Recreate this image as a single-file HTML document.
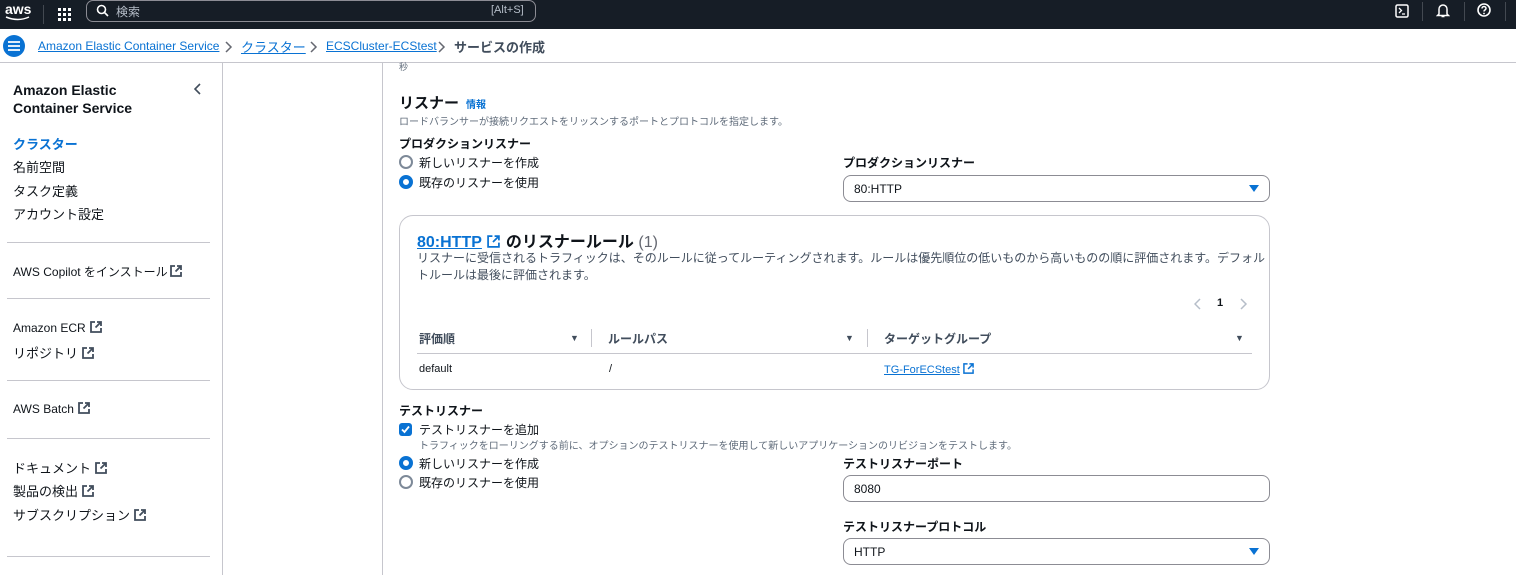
<!DOCTYPE html>
<html><head><meta charset="utf-8"><style>
*{margin:0;padding:0;box-sizing:border-box}
body{width:1516px;height:575px;overflow:hidden;background:#fff;font-family:"Liberation Sans","Noto Sans CJK JP",sans-serif;color:#0f141a;position:relative;font-size:13px}
.a{position:absolute;white-space:nowrap}
.top{position:absolute;left:0;top:0;width:1516px;height:29px;background:#161d26}
.bc{position:absolute;left:0;top:29px;width:1516px;height:34px;background:#fff;border-bottom:1px solid #c6c6cd}
.lnk{color:#0972d3;text-decoration:underline}
.hr{position:absolute;left:7px;width:203px;height:1px;background:#c6c6cd}
.nav{font-size:13px;color:#0f141a}
svg.ex{width:12px;height:12px;vertical-align:-1px;margin-left:4px}
.radio{position:absolute;width:14px;height:14px;border-radius:50%;border:2px solid #7d8998}
.radio.on{border:4px solid #0972d3}
.sel{position:absolute;border:1px solid #8c8c94;border-radius:8px;height:27px;font-size:12px;padding:6px 10px}
.tri{position:absolute;right:10px;top:9px;width:0;height:0;border-left:5px solid transparent;border-right:5px solid transparent;border-top:7px solid #0972d3}
.sm{font-size:10px;color:#5f6b7a}
.b{font-weight:bold}
.chev{position:absolute;top:12px}
</style></head><body>
<div class="top">
 <div class="a" style="left:5px;top:1px;color:#fff;font-size:14px;font-weight:bold">aws</div>
 <svg class="a" style="left:5px;top:16px" width="26" height="6"><path d="M1 1 Q13 6 24 1" stroke="#fff" stroke-width="1.5" fill="none"/></svg>
 <div class="a" style="left:43px;top:5px;width:1px;height:19px;background:#434951"></div>
 <svg class="a" style="left:58px;top:8px" width="13" height="13"><g fill="#fff"><rect x="0" y="0" width="3" height="3"/><rect x="5" y="0" width="3" height="3"/><rect x="10" y="0" width="3" height="3"/><rect x="0" y="5" width="3" height="3"/><rect x="5" y="5" width="3" height="3"/><rect x="10" y="5" width="3" height="3"/><rect x="0" y="10" width="3" height="3"/><rect x="5" y="10" width="3" height="3"/><rect x="10" y="10" width="3" height="3"/></g></svg>
 <div class="a" style="left:86px;top:0px;width:450px;height:22px;border:1px solid #8c8c94;border-radius:7px"></div>
 <svg class="a" style="left:96px;top:4px" width="13" height="13"><circle cx="5.5" cy="5.5" r="4" stroke="#fff" stroke-width="1.6" fill="none"/><path d="M8.5 8.5 12 12" stroke="#fff" stroke-width="1.6"/></svg>
 <div class="a" style="left:116px;top:3px;color:#b6bec9;font-size:12px">検索</div>
 <div class="a" style="left:491px;top:4px;color:#b6bec9;font-size:11px">[Alt+S]</div>
 <svg class="a" style="left:1395px;top:4px" width="14" height="14"><rect x="1" y="1" width="12" height="12" rx="1.5" stroke="#fff" stroke-width="1.5" fill="none"/><path d="M4 4 6.5 6.5 4 9M7 10h3" stroke="#fff" stroke-width="1.3" fill="none"/></svg>
 <div class="a" style="left:1422px;top:2px;width:1px;height:19px;background:#434951"></div>
 <svg class="a" style="left:1436px;top:3px" width="14" height="15"><path d="M3 11V6a4 4 0 018 0v5l1.5 1.5h-11z M5.5 13.5h3" stroke="#fff" stroke-width="1.5" fill="none"/></svg>
 <div class="a" style="left:1464px;top:2px;width:1px;height:19px;background:#434951"></div>
 <svg class="a" style="left:1477px;top:3px" width="14" height="14"><circle cx="7" cy="7" r="6" stroke="#fff" stroke-width="1.6" fill="none"/><path d="M5 5.5a2 2 0 114 0c0 1.3-2 1.5-2 3" stroke="#fff" stroke-width="1.5" fill="none"/><circle cx="7" cy="10.5" r=".9" fill="#fff"/></svg>
 <div class="a" style="left:1505px;top:2px;width:1px;height:19px;background:#434951"></div>
</div>
<div class="bc">
 <div class="a" style="left:3px;top:6px;width:22px;height:22px;border-radius:50%;background:#0972d3"></div>
 <svg class="a" style="left:8px;top:12px" width="12" height="10"><path d="M0 1h12M0 5h12M0 9h12" stroke="#fff" stroke-width="1.8"/></svg>
 <div class="a lnk" style="left:38px;top:10px;font-size:12px">Amazon Elastic Container Service</div>
 <svg class="chev" style="left:225px" width="8" height="12"><path d="M1 1 6 6 1 11" stroke="#656871" stroke-width="1.5" fill="none"/></svg>
 <div class="a lnk" style="left:241px;top:8px;font-size:13px">クラスター</div>
 <svg class="chev" style="left:310px" width="8" height="12"><path d="M1 1 6 6 1 11" stroke="#656871" stroke-width="1.5" fill="none"/></svg>
 <div class="a lnk" style="left:326px;top:10px;font-size:12px">ECSCluster-ECStest</div>
 <svg class="chev" style="left:438px" width="8" height="12"><path d="M1 1 6 6 1 11" stroke="#656871" stroke-width="1.5" fill="none"/></svg>
 <div class="a b" style="left:454px;top:8px;font-size:13px;color:#414d5c">サービスの作成</div>
</div>
<div class="a" style="left:222px;top:63px;width:1px;height:512px;background:#c6c6cd"></div>
<div class="a" style="left:382px;top:63px;width:1px;height:512px;background:#c6c6cd"></div>

<div class="a b" style="left:13px;top:81px;font-size:14px;line-height:18px">Amazon Elastic<br>Container Service</div>
<svg class="a" style="left:194px;top:83px" width="8" height="12"><path d="M6 1 1 6 6 11" stroke="#414d5c" stroke-width="1.6" fill="none"/></svg>
<div class="a b nav" style="left:13px;top:134px;color:#0972d3">クラスター</div>
<div class="a nav" style="left:13px;top:157px">名前空間</div>
<div class="a nav" style="left:13px;top:181px">タスク定義</div>
<div class="a nav" style="left:13px;top:204px">アカウント設定</div>
<div class="hr" style="top:242px"></div>
<div class="a nav" style="left:13px;top:263px;font-size:12px">AWS Copilot をインストール<svg class="ex" viewBox="0 0 12 12" style="margin-left:2px"><path d="M5 1H1v10h10V7M7 1h4v4M11 1 5.5 6.5" stroke="#414d5c" stroke-width="1.8" fill="none"/></svg></div>
<div class="hr" style="top:298px"></div>
<div class="a nav" style="left:13px;top:321px;font-size:12px">Amazon ECR<svg class="ex" viewBox="0 0 12 12"><path d="M5 1H1v10h10V7M7 1h4v4M11 1 5.5 6.5" stroke="#414d5c" stroke-width="1.8" fill="none"/></svg></div>
<div class="a nav" style="left:13px;top:343px">リポジトリ<svg class="ex" viewBox="0 0 12 12"><path d="M5 1H1v10h10V7M7 1h4v4M11 1 5.5 6.5" stroke="#414d5c" stroke-width="1.8" fill="none"/></svg></div>
<div class="hr" style="top:380px"></div>
<div class="a nav" style="left:13px;top:402px;font-size:12px">AWS Batch<svg class="ex" viewBox="0 0 12 12"><path d="M5 1H1v10h10V7M7 1h4v4M11 1 5.5 6.5" stroke="#414d5c" stroke-width="1.8" fill="none"/></svg></div>
<div class="hr" style="top:438px"></div>
<div class="a nav" style="left:13px;top:458px">ドキュメント<svg class="ex" viewBox="0 0 12 12"><path d="M5 1H1v10h10V7M7 1h4v4M11 1 5.5 6.5" stroke="#414d5c" stroke-width="1.8" fill="none"/></svg></div>
<div class="a nav" style="left:13px;top:481px">製品の検出<svg class="ex" viewBox="0 0 12 12"><path d="M5 1H1v10h10V7M7 1h4v4M11 1 5.5 6.5" stroke="#414d5c" stroke-width="1.8" fill="none"/></svg></div>
<div class="a nav" style="left:13px;top:505px">サブスクリプション<svg class="ex" viewBox="0 0 12 12"><path d="M5 1H1v10h10V7M7 1h4v4M11 1 5.5 6.5" stroke="#414d5c" stroke-width="1.8" fill="none"/></svg></div>
<div class="hr" style="top:556px"></div>

<div class="a sm" style="left:399px;top:60px;font-size:9px">秒</div>
<div class="a b" style="left:399px;top:92px;font-size:15px">リスナー</div>
<div class="a b" style="left:466px;top:96px;font-size:10px;color:#0972d3">情報</div>
<div class="a sm" style="left:399px;top:113px">ロードバランサーが接続リクエストをリッスンするポートとプロトコルを指定します。</div>
<div class="a b" style="left:399px;top:135px;font-size:12px">プロダクションリスナー</div>
<div class="radio" style="left:399px;top:155px"></div>
<div class="a" style="left:419px;top:154px;font-size:12px">新しいリスナーを作成</div>
<div class="radio on" style="left:399px;top:175px"></div>
<div class="a" style="left:419px;top:174px;font-size:12px">既存のリスナーを使用</div>
<div class="a b" style="left:843px;top:154px;font-size:12px">プロダクションリスナー</div>
<div class="sel" style="left:843px;top:175px;width:427px">80:HTTP<div class="tri"></div></div>

<div class="a" style="left:399px;top:215px;width:871px;height:175px;border:1px solid #c6c6cd;border-radius:14px"></div>
<div class="a b" style="left:417px;top:228px;font-size:16px"><span class="lnk">80:HTTP</span><svg viewBox="0 0 12 12" style="width:13px;height:13px;margin:0 6px 0 5px;vertical-align:-1px"><path d="M5 1H1v10h10V7M7 1h4v4M11 1 5.5 6.5" stroke="#0972d3" stroke-width="1.6" fill="none"/></svg>のリスナールール <span style="font-weight:normal;color:#656871">(1)</span></div>
<div class="a" style="left:417px;top:250px;font-size:12px;color:#414d5c;line-height:17px">リスナーに受信されるトラフィックは、そのルールに従ってルーティングされます。ルールは優先順位の低いものから高いものの順に評価されます。デフォル<br>トルールは最後に評価されます。</div>
<svg class="a" style="left:1194px;top:298px" width="8" height="12"><path d="M6 1 1 6 6 11" stroke="#b6bec9" stroke-width="1.5" fill="none"/></svg>
<div class="a b" style="left:1217px;top:297px;font-size:11px">1</div>
<svg class="a" style="left:1240px;top:298px" width="8" height="12"><path d="M1 1 6 6 1 11" stroke="#b6bec9" stroke-width="1.5" fill="none"/></svg>
<div class="a b" style="left:419px;top:330px;font-size:12px;color:#414d5c">評価順</div>
<div class="a" style="left:570px;top:333px;font-size:9px;color:#414d5c">▼</div>
<div class="a" style="left:591px;top:329px;width:1px;height:18px;background:#c6c6cd"></div>
<div class="a b" style="left:608px;top:330px;font-size:12px;color:#414d5c">ルールパス</div>
<div class="a" style="left:845px;top:333px;font-size:9px;color:#414d5c">▼</div>
<div class="a" style="left:867px;top:329px;width:1px;height:18px;background:#c6c6cd"></div>
<div class="a b" style="left:884px;top:330px;font-size:12px;color:#414d5c">ターゲットグループ</div>
<div class="a" style="left:1235px;top:333px;font-size:9px;color:#414d5c">▼</div>
<div class="a" style="left:417px;top:353px;width:835px;height:1px;background:#c6c6cd"></div>
<div class="a" style="left:419px;top:363px;font-size:11px">default</div>
<div class="a" style="left:609px;top:363px;font-size:11px">/</div>
<div class="a" style="left:884px;top:363px;font-size:11px"><span class="lnk">TG-ForECStest</span><svg viewBox="0 0 12 12" style="width:11px;height:11px;margin-left:3px;vertical-align:-1px"><path d="M5 1H1v10h10V7M7 1h4v4M11 1 5.5 6.5" stroke="#0972d3" stroke-width="1.6" fill="none"/></svg></div>

<div class="a b" style="left:399px;top:402px;font-size:12px">テストリスナー</div>
<div class="a" style="left:399px;top:423px;width:13px;height:13px;border-radius:3px;background:#0972d3"></div>
<svg class="a" style="left:399px;top:423px" width="13" height="13"><path d="M3 6.5 5.5 9 10 3.5" stroke="#fff" stroke-width="1.8" fill="none"/></svg>
<div class="a" style="left:419px;top:421px;font-size:12px">テストリスナーを追加</div>
<div class="a sm" style="left:419px;top:437px">トラフィックをローリングする前に、オプションのテストリスナーを使用して新しいアプリケーションのリビジョンをテストします。</div>
<div class="radio on" style="left:399px;top:456px"></div>
<div class="a" style="left:419px;top:455px;font-size:12px">新しいリスナーを作成</div>
<div class="radio" style="left:399px;top:475px"></div>
<div class="a" style="left:419px;top:474px;font-size:12px">既存のリスナーを使用</div>
<div class="a b" style="left:843px;top:455px;font-size:12px">テストリスナーポート</div>
<div class="sel" style="left:843px;top:475px;width:427px">8080</div>
<div class="a b" style="left:843px;top:518px;font-size:12px">テストリスナープロトコル</div>
<div class="sel" style="left:843px;top:538px;width:427px">HTTP<div class="tri"></div></div>
</body></html>
